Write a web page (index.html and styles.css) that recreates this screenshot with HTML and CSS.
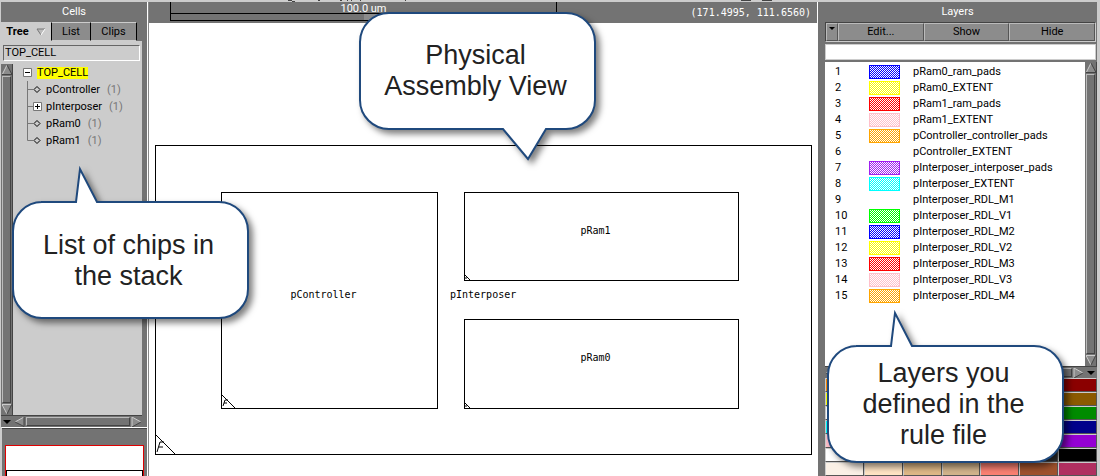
FILE: index.html
```html
<!DOCTYPE html>
<html lang="en">
<head>
<meta charset="utf-8">
<title>Assembly viewer</title>
<link rel="stylesheet" href="styles.css">
</head>
<body>
<svg class="defs" width="0" height="0" aria-hidden="true"><defs><pattern id="weave" width="2" height="2" patternUnits="userSpaceOnUse"><path d="M0 0h1v1H0zM1 1h1v1H1z" fill="#fff" shape-rendering="crispEdges"/></pattern></defs></svg>
<div class="app">
  <div class="strip">
    <svg width="1100" height="2" aria-hidden="true"><path d="M288 .5h4M292 1.500h3M318 .5h2M340 .5h2M347 .5h1M351 .5h1M360 .5h1M405 .5h1M741 .5h10M762 .5h10" stroke="#444"/></svg>
  </div>
  <div class="main">
    <aside class="cells">
      <h2 class="title">Cells</h2>
      <div class="tabs" role="tablist">
        <button class="tab tab-active" role="tab" aria-selected="true">Tree
          <svg width="10" height="8" viewBox="0 0 10 8" aria-hidden="true"><path d="M1 1h8L5 7z" fill="#bbb"/><path d="M9 1H1l4 6" fill="none" stroke="#777"/><path d="M9 1L5 7" stroke="#fff"/></svg>
        </button>
        <button class="tab tab-list" role="tab">List</button>
        <button class="tab tab-clips" role="tab">Clips</button>
      </div>
      <div class="cells-body">
        <input class="cell-filter" aria-label="Cell name" value="TOP_CELL">
        <div class="tree-area">
          <div class="vbar">
            <svg width="10" height="10" viewBox="0 0 10 10"><path d="M5 0L10 10H0z" fill="#8c8c8c"/><path d="M5 0L0 10" stroke="#ccc"/><path d="M5 0l5 9.500H0" fill="none" stroke="#444"/></svg>
            <div class="thumb"></div>
            <svg width="10" height="10" viewBox="0 0 10 10"><path d="M0 0h10L5 10z" fill="#8c8c8c"/><path d="M10 .5H0L5 10" fill="none" stroke="#ccc"/><path d="M5 10L10 0" stroke="#444"/></svg>
          </div>
          <ul class="tree">
            <li class="node root"><svg width="9" height="9" viewBox="0 0 9 9"><path d="M.5.5h8v8h-8z" fill="#fff" stroke="#777"/><path d="M2 4.500h5" stroke="#000"/></svg><span class="selected">TOP_CELL</span></li>
            <li class="node child"><svg width="17" height="17" viewBox="0 0 17 17"><path d="M.5 0v17M1 8.500h5" stroke="#777"/><path d="M7 8.500l3-3 3 3-3 3z" fill="none" stroke="#000"/></svg><span>pController</span><span class="count">(1)</span></li>
            <li class="node child"><svg width="17" height="17" viewBox="0 0 17 17"><path d="M.5 0v17M1 8.500h5" stroke="#777"/><path d="M6.500 4.500h8v8h-8z" fill="#fff" stroke="#777"/><path d="M8 8.500h5M10.500 6v5" stroke="#000"/></svg><span>pInterposer</span><span class="count">(1)</span></li>
            <li class="node child"><svg width="17" height="17" viewBox="0 0 17 17"><path d="M.5 0v17M1 8.500h5" stroke="#777"/><path d="M7 8.500l3-3 3 3-3 3z" fill="none" stroke="#000"/></svg><span>pRam0</span><span class="count">(1)</span></li>
            <li class="node child"><svg width="17" height="17" viewBox="0 0 17 17"><path d="M.5 0v8.500h5.500" fill="none" stroke="#777"/><path d="M7 8.500l3-3 3 3-3 3z" fill="none" stroke="#000"/></svg><span>pRam1</span><span class="count">(1)</span></li>
          </ul>
        </div>
        <div class="hbar">
          <svg width="12" height="10" viewBox="0 0 12 10"><path d="M2 3h8L6 7z"/></svg>
          <svg width="11" height="10" viewBox="0 0 11 10"><path d="M10 0v10L1 5z" fill="#8c8c8c"/><path d="M10 0L1 5" stroke="#ccc"/><path d="M1 5l9 4.500V0" fill="none" stroke="#444"/></svg>
          <div class="thumb"></div>
          <svg width="11" height="10" viewBox="0 0 11 10"><path d="M1 0v10l9-5z" fill="#8c8c8c"/><path d="M1 10V0l9 5" fill="none" stroke="#ccc"/><path d="M10 5L1 10" stroke="#444"/></svg>
        </div>
      </div>
      <div class="navigator"><div class="viewport"><div class="extent"></div></div></div>
      <div class="callout callout-cells">
        <svg class="bubble" width="239" height="153" viewBox="-1 -1 239 153" aria-hidden="true"><path d="M29 34H64L68 1L85 34H207A29 29 0 0 1 236 63V121A29 29 0 0 1 207 150H30A29 29 0 0 1 1 121V63A29 29 0 0 1 30 34z"/></svg>
        <p class="callout-text">List of chips in<br>the stack</p>
      </div>
    </aside>

    <main class="view">
      <header class="view-head">
        <div class="ruler"><span class="ruler-label">100.0 um</span><div class="ruler-bar"><div class="ruler-half"></div></div></div>
        <span class="coords">(171.4995, 111.6560)</span>
      </header>
      <div class="canvas">
        <div class="chip interposer"><svg class="mark" width="19" height="19" viewBox="0 0 19 19"><path d="M0 0l19 19M1 17l3-10h4M3 12h4"/></svg></div>
        <span class="chip-label interposer-label">pInterposer</span>
        <div class="chip controller"><span class="chip-label">pController</span><svg class="mark" width="13" height="13" viewBox="0 0 13 13"><path d="M0 0l13 13M1 11l2-6h3M2 8h3"/></svg></div>
        <div class="chip ram1"><span class="chip-label">pRam1</span><svg class="mark" width="5" height="5" viewBox="0 0 5 5"><path d="M0 0l5 5M0 3h2"/></svg></div>
        <div class="chip ram0"><span class="chip-label">pRam0</span><svg class="mark" width="5" height="5" viewBox="0 0 5 5"><path d="M0 0l5 5M0 3h2"/></svg></div>
      </div>
      <div class="callout callout-view">
        <svg class="bubble" width="239" height="149" viewBox="-1 -1 239 149" aria-hidden="true"><path d="M30 1H207A29 29 0 0 1 236 30V88A29 29 0 0 1 207 117H187L169 147L144 117H30A29 29 0 0 1 1 88V30A29 29 0 0 1 30 1z"/></svg>
        <p class="callout-text">Physical<br>Assembly View</p>
      </div>
    </main>

    <aside class="layers">
      <h2 class="title">Layers</h2>
      <div class="actions">
        <button class="menu" aria-label="Layer menu"><svg width="6" height="4" viewBox="0 0 6 4"><path d="M0 0h6L3 3z"/></svg></button>
        <button class="action">Edit...</button>
        <button class="action">Show</button>
        <button class="action">Hide</button>
      </div>
      <input class="layer-filter" aria-label="Filter layers">
      <div class="list-area">
        <table class="list">
          <tbody>
          <tr><td class="num">1</td><td class="sw"><svg class="swatch blue"><rect width="100%" height="100%" fill="url(#weave)"/></svg></td><td>pRam0_ram_pads</td></tr>
          <tr><td class="num">2</td><td class="sw"><svg class="swatch yellow"><rect width="100%" height="100%" fill="url(#weave)"/></svg></td><td>pRam0_EXTENT</td></tr>
          <tr><td class="num">3</td><td class="sw"><svg class="swatch red"><rect width="100%" height="100%" fill="url(#weave)"/></svg></td><td>pRam1_ram_pads</td></tr>
          <tr><td class="num">4</td><td class="sw"><svg class="swatch pink"><rect width="100%" height="100%" fill="url(#weave)"/></svg></td><td>pRam1_EXTENT</td></tr>
          <tr><td class="num">5</td><td class="sw"><svg class="swatch orange"><rect width="100%" height="100%" fill="url(#weave)"/></svg></td><td>pController_controller_pads</td></tr>
          <tr><td class="num">6</td><td class="sw"></td><td>pController_EXTENT</td></tr>
          <tr><td class="num">7</td><td class="sw"><svg class="swatch purple"><rect width="100%" height="100%" fill="url(#weave)"/></svg></td><td>pInterposer_interposer_pads</td></tr>
          <tr><td class="num">8</td><td class="sw"><svg class="swatch cyan"><rect width="100%" height="100%" fill="url(#weave)"/></svg></td><td>pInterposer_EXTENT</td></tr>
          <tr><td class="num">9</td><td class="sw"></td><td>pInterposer_RDL_M1</td></tr>
          <tr><td class="num">10</td><td class="sw"><svg class="swatch green"><rect width="100%" height="100%" fill="url(#weave)"/></svg></td><td>pInterposer_RDL_V1</td></tr>
          <tr><td class="num">11</td><td class="sw"><svg class="swatch blue"><rect width="100%" height="100%" fill="url(#weave)"/></svg></td><td>pInterposer_RDL_M2</td></tr>
          <tr><td class="num">12</td><td class="sw"><svg class="swatch yellow"><rect width="100%" height="100%" fill="url(#weave)"/></svg></td><td>pInterposer_RDL_V2</td></tr>
          <tr><td class="num">13</td><td class="sw"><svg class="swatch red"><rect width="100%" height="100%" fill="url(#weave)"/></svg></td><td>pInterposer_RDL_M3</td></tr>
          <tr><td class="num">14</td><td class="sw"><svg class="swatch pink"><rect width="100%" height="100%" fill="url(#weave)"/></svg></td><td>pInterposer_RDL_V3</td></tr>
          <tr><td class="num">15</td><td class="sw"><svg class="swatch orange"><rect width="100%" height="100%" fill="url(#weave)"/></svg></td><td>pInterposer_RDL_M4</td></tr>
          </tbody>
        </table>
        <div class="vbar">
          <svg width="10" height="10" viewBox="0 0 10 10"><path d="M5 0L10 10H0z" fill="#8c8c8c"/><path d="M5 0L0 10" stroke="#ccc"/><path d="M5 0l5 9.500H0" fill="none" stroke="#444"/></svg>
          <div class="thumb"></div>
          <svg width="10" height="10" viewBox="0 0 10 10"><path d="M0 0h10L5 10z" fill="#8c8c8c"/><path d="M10 .5H0L5 10" fill="none" stroke="#ccc"/><path d="M5 10L10 0" stroke="#444"/></svg>
        </div>
      </div>
      <div class="hbar">
        <svg width="11" height="10" viewBox="0 0 11 10"><path d="M10 0v10L1 5z" fill="#8c8c8c"/><path d="M10 0L1 5" stroke="#ccc"/><path d="M1 5l9 4.500V0" fill="none" stroke="#444"/></svg>
        <div class="thumb"></div>
        <svg width="11" height="10" viewBox="0 0 11 10"><path d="M1 0v10l9-5z" fill="#8c8c8c"/><path d="M1 10V0l9 5" fill="none" stroke="#ccc"/><path d="M10 5L1 10" stroke="#444"/></svg>
        <svg width="12" height="10" viewBox="0 0 12 10"><path d="M2 3h8L6 7z"/></svg>
      </div>
      <div class="palette">
        <i class="c-orange"></i><i class="c-orange"></i><i class="c-orange"></i><i class="c-red"></i><i class="c-red"></i><i class="c-red"></i><i class="c-darkred"></i>
        <i class="c-yellow"></i><i class="c-yellow"></i><i class="c-yellow"></i><i class="c-brown"></i><i class="c-brown"></i><i class="c-brown"></i><i class="c-brown"></i>
        <i class="c-white"></i><i class="c-green"></i><i class="c-green"></i><i class="c-green"></i><i class="c-green"></i><i class="c-green"></i><i class="c-green"></i>
        <i class="c-cyan"></i><i class="c-cyan"></i><i class="c-navy"></i><i class="c-navy"></i><i class="c-navy"></i><i class="c-navy"></i><i class="c-navy"></i>
        <i class="c-pink"></i><i class="c-pink"></i><i class="c-violet"></i><i class="c-violet"></i><i class="c-violet"></i><i class="c-violet"></i><i class="c-violet"></i>
        <i class="c-white"></i><i class="c-white"></i><i class="c-gray"></i><i class="c-gray"></i><i class="c-gray"></i><i class="c-char"></i><i class="c-black"></i>
        <i class="c-linen"></i><i class="c-bisque"></i><i class="c-wood"></i><i class="c-tan"></i><i class="c-salmon"></i><i class="c-sienna"></i><i class="c-maroon"></i>
      </div>
      <div class="callout callout-layers">
        <svg class="bubble" width="239" height="153" viewBox="-1 -1 239 153" aria-hidden="true"><path d="M29 34H64L68 1L85 34H207A29 29 0 0 1 236 63V121A29 29 0 0 1 207 150H30A29 29 0 0 1 1 121V63A29 29 0 0 1 30 34z"/></svg>
        <p class="callout-text">Layers you<br>defined in the<br>rule file</p>
      </div>
    </aside>
  </div>
</div>
</body>
</html>
```
FILE: styles.css
```css
* { box-sizing: border-box; }
body { margin: 0; font: 11px/16px Roboto, "Liberation Sans", sans-serif; color: #000; }
button, input { font: inherit; color: inherit; border-radius: 0; margin: 0; }
svg { display: block; flex: none; }
.defs { position: absolute; }
.app { display: flex; flex-direction: column; height: 100vh; overflow: hidden; background: #ccc; }
.strip { height: 2px; flex: none; overflow: hidden; }
.main { display: flex; flex: 1; min-height: 0; }
.title { margin: 0; height: 20px; flex: none; font-size: 11px; font-weight: 400; line-height: 19px; text-align: center; color: #fff; }

.cells { position: relative; z-index: 2; display: flex; flex-direction: column; width: 147px; flex: none; margin-left: 1px; background: #737373; border-right: 1px solid #fff; }
.tabs { display: flex; height: 19px; flex: none; margin-right: 5px; }
.tab { display: flex; align-items: center; justify-content: center; gap: 7px; padding: 0; background: #8c8c8c; border: 0; border-top: 1px solid #ccc; border-right: 1px solid #000; border-bottom: 1px solid #ccc; }
.tab-active { width: 51px; background: #ccc; font-weight: 700; }
.tab-list { width: 39px; }
.tab-clips { width: 46px; }
.cells-body { display: flex; flex-direction: column; flex: 1; min-height: 0; margin-right: 5px; background: #ccc; }
.cell-filter { height: 16px; flex: none; margin: 4px 2px 0; padding: 0 1px; min-width: 0; background: #ccc; border: 1px solid; border-color: #666 #fff #fff #666; outline: 0; }
.tree-area { display: flex; flex: 1; min-height: 0; margin-top: 3px; }
.vbar { display: flex; flex-direction: column; width: 12px; flex: none; gap: 1px; padding: 1px; background: #737373; border-right: 1px solid #444; }
.thumb { flex: 1; background: #737373; border: 1px solid; border-color: #bbb #444 #444 #bbb; }
.hbar { display: flex; height: 12px; flex: none; gap: 1px; padding: 1px 0; background: #737373; border-top: 1px solid #444; }
.tree { margin: 0; padding: 0 0 0 10px; list-style: none; }
.node { display: flex; align-items: center; height: 17px; }
.root { gap: 5px; }
.child { margin-left: 4px; gap: 2px; }
.selected { background: #ff0; height: 12px; line-height: 12px; }
.count { margin-left: 5px; color: #777; }
.navigator { display: flex; height: 49px; flex: none; padding: 17px 3px 0 3px; border-top: 1px solid #fff; border-left: 1px solid #ccc; box-shadow: inset 0 1px #444; }
.viewport { flex: 1; padding-top: 24px; background: #fff; border: 1px solid #e00000; border-bottom: 0; }
.extent { height: 100%; border: 1px solid #000; border-bottom: 0; }

.view { position: relative; z-index: 1; display: flex; flex-direction: column; flex: 1; min-width: 0; background: #fff; border-left: 1px solid #888; border-right: 1px solid #fff; }
.view-head { display: flex; justify-content: space-between; height: 21px; flex: none; padding: 0 6px 0 21px; background: #737373; color: #fff; }
.ruler { display: flex; flex-direction: column; width: 387px; height: 19px; border: solid #000; border-width: 0 1px; }
.ruler-label { height: 11px; line-height: 13px; text-align: center; }
.ruler-bar { height: 8px; border: solid #000; border-width: 1px 0; }
.ruler-half { width: 50%; height: 100%; margin-left: auto; background: #8c8c8c; }
.coords { font: 10px/22px "DejaVu Sans Mono", monospace; }
.canvas { position: relative; flex: 1; overflow: hidden; }
.chip { position: absolute; display: flex; align-items: center; justify-content: center; border: 1px solid #000; }
.interposer { left: 6px; top: 122px; width: 657px; height: 310px; }
.controller { left: 72px; top: 169px; width: 217px; height: 217px; }
.ram1 { left: 315px; top: 169px; width: 275px; height: 89px; }
.ram0 { left: 315px; top: 296px; width: 275px; height: 90px; }
.chip-label { padding: 0 12px 12px 0; font: 10px/12px "DejaVu Sans Mono", monospace; }
.interposer-label { position: absolute; left: 301px; top: 266px; }
.mark { position: absolute; left: 0; bottom: 0; fill: none; stroke: #000; }

.layers { position: relative; z-index: 3; display: flex; flex-direction: column; width: 279px; flex: none; margin-right: 3px; background: #737373; }
.actions { display: flex; height: 20px; flex: none; margin: 0 1px 0 7px; border: 1px solid; border-color: #444 #ccc #ccc #444; }
.menu, .action { padding: 0; background: #8c8c8c; border: 1px solid; border-color: #bbb #555 #555 #bbb; }
.menu { display: flex; justify-content: center; width: 12px; padding-top: 3px; }
.action { flex: 1; }
.layer-filter { height: 16px; flex: none; margin: 2px 1px 0 7px; min-width: 0; background: #fff; border: 1px solid #ccc; outline: 0; }
.list-area { display: flex; flex: 1; min-height: 0; margin: 2px 0 0 7px; background: #fff; justify-content: space-between; }
.list { align-self: flex-start; border-collapse: collapse; margin-top: 2px; }
.list td { height: 16px; padding: 0; line-height: 16px; }
.list .num { width: 44px; padding-left: 10px; }
.list .sw { width: 44px; }
.swatch { width: 31px; height: 14px; border: 1px solid var(--c); background: var(--c); }
.blue { --c: #0000ff; }
.yellow { --c: #ffff00; }
.red { --c: #ff0000; }
.pink { --c: #ffc0cb; }
.orange { --c: #ffa500; }
.purple { --c: #a020f0; }
.cyan { --c: #00ffff; }
.green { --c: #00ff00; }
.layers .hbar { margin-left: 7px; }
.palette { display: grid; grid-template-columns: repeat(7, 1fr); grid-template-rows: repeat(7, 1fr); height: 98px; flex: none; margin-left: 7px; }
.palette i { border: 1px solid; border-color: #ccc #555 #555 #ccc; }
.c-orange { background: #ff8c00; }
.c-red { background: #cd0000; }
.c-darkred { background: #8b0000; }
.c-yellow { background: #ff0; }
.c-brown { background: #8b5a00; }
.c-white { background: #fff; }
.c-green { background: #008b00; }
.c-cyan { background: #0ff; }
.c-navy { background: #00008b; }
.c-pink { background: #ffc0cb; }
.c-violet { background: #9400d3; }
.c-gray { background: #999; }
.c-char { background: #333; }
.c-black { background: #000; }
.c-linen { background: #faf0e6; }
.c-bisque { background: #ffe4c4; }
.c-wood { background: #deb887; }
.c-tan { background: #d2b48c; }
.c-salmon { background: #fa8072; }
.c-sienna { background: #a0522d; }
.c-maroon { background: #b03060; }

.callout { position: absolute; display: flex; width: 239px; justify-content: center; align-items: center; padding-right: 4px; }
.bubble { position: absolute; left: 0; top: 0; fill: #fff; stroke: #1f497d; stroke-width: 2px; overflow: visible; filter: drop-shadow(4px 4px 3px rgba(0, 0, 0, .5)); }
.callout-text { position: relative; margin: 0; font: 27px/31px "Liberation Sans", Arial, sans-serif; text-align: center; color: #222; }
.callout-cells { left: 10px; top: 165px; height: 153px; padding-top: 34px; }
.callout-view { left: 209px; top: 9px; height: 149px; padding-bottom: 29px; }
.callout-layers { left: 8px; top: 309px; height: 153px; padding-top: 34px; }
```
